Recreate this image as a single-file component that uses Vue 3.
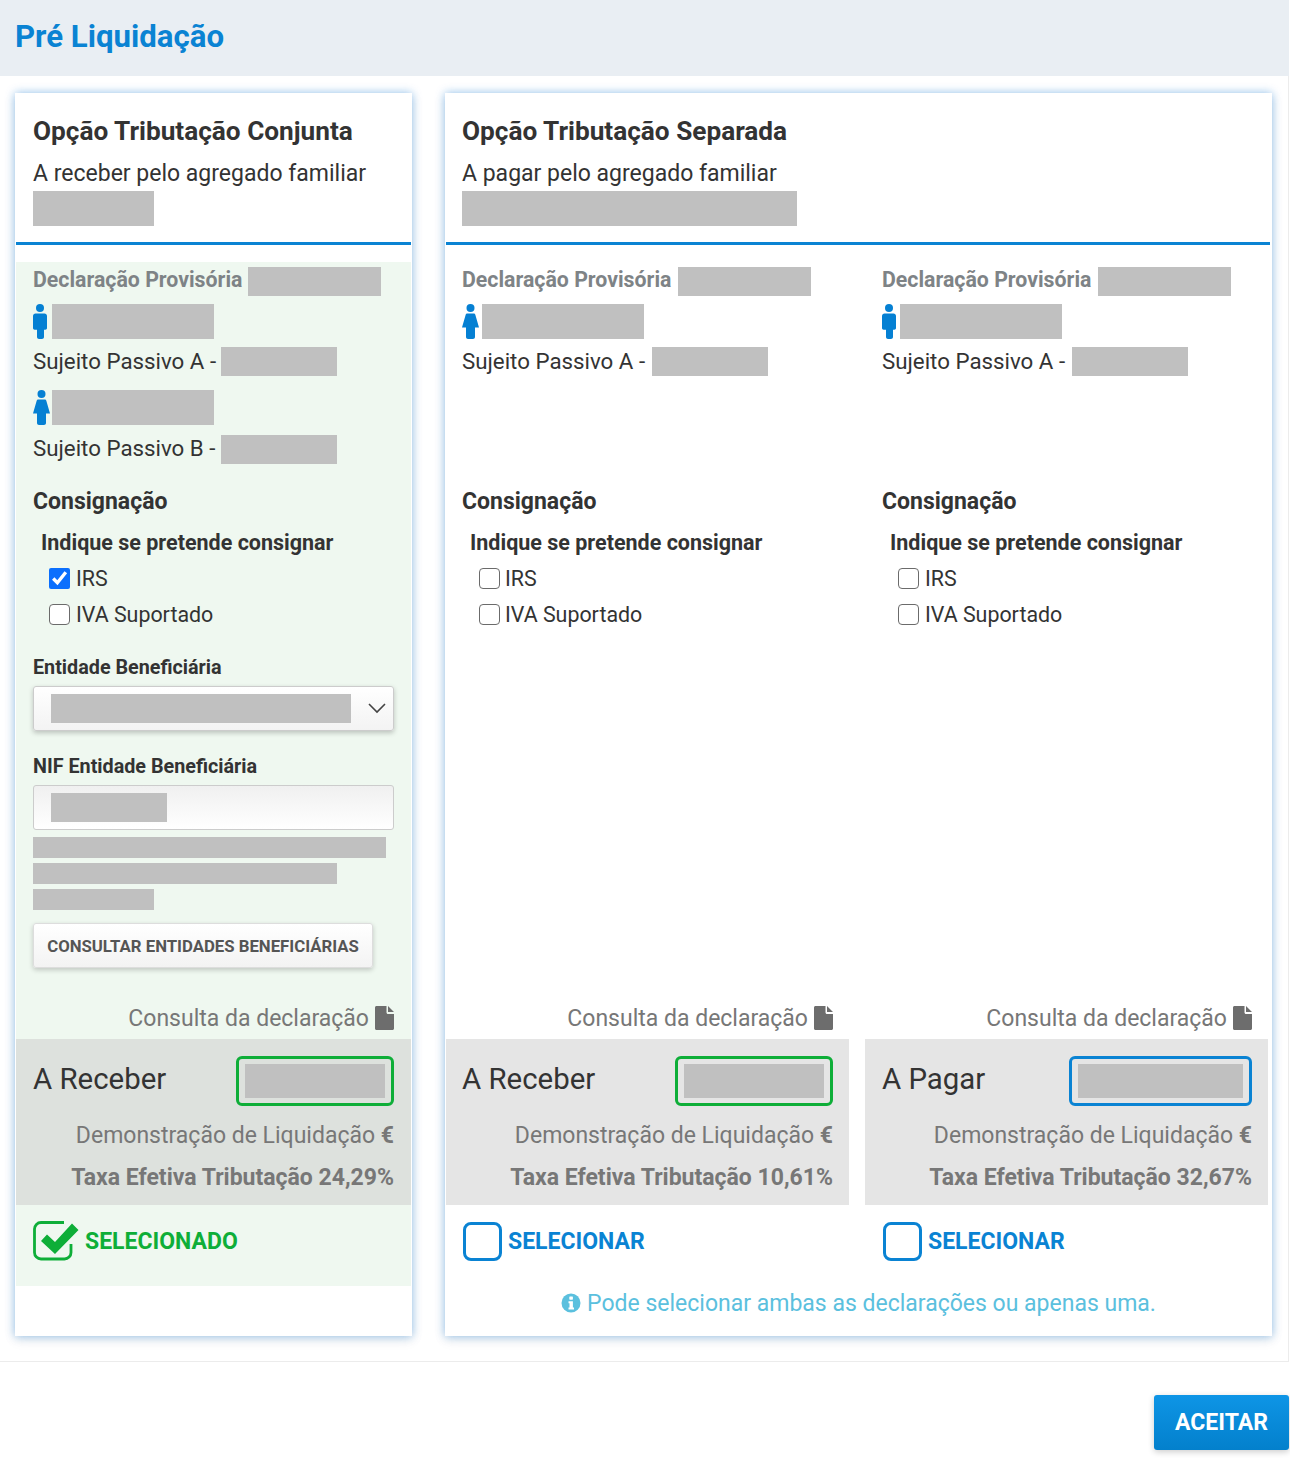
<template>
  <div class="page">
    <header class="page-head">
      <h1>Pré Liquidação</h1>
    </header>

    <main class="page-body">
      <section v-for="card in cards" :key="card.title" class="card" :class="{ 'card-wide': card.columns.length > 1 }">
        <div class="card-head">
          <h2>{{ card.title }}</h2>
          <p>{{ card.subtitle }}</p>
          <span class="redact total" :style="{ width: card.totalWidth + 'px' }"></span>
        </div>

        <div class="columns">
          <article
            v-for="(col, i) in card.columns"
            :key="i"
            class="col"
            :class="[{ selected: col.selected }, col.cls]"
          >
            <div class="decl">
              <b>Declaração Provisória</b>
              <span class="redact r-decl"></span>
            </div>

            <div class="people">
              <template v-for="p in col.people" :key="p.label">
                <div class="person">
                  <svg v-if="p.icon === 'f'" class="ico-f" viewBox="0 0 17 35" fill="#0580d3">
                    <circle cx="8.5" cy="4" r="4" />
                    <path d="M5.5 9.5h6c1 0 1.6.5 1.9 1.4L17 23.5H13v9.5c0 1.3-.9 2-2 2H6c-1.100 0-2-.7-2-2v-9.500H0l3.600-12.600c.3-.9.9-1.400 1.900-1.400z" />
                  </svg>
                  <svg v-else class="ico-m" viewBox="0 0 14 35" fill="#0580d3">
                    <circle cx="7" cy="4" r="4" />
                    <path d="M2.500 9.500h9c1.400 0 2.500 1.100 2.500 2.500v12c0 1-.7 1.700-1.700 1.700h-1.300v7.300c0 1.100-.9 2-2 2h-3c-1.100 0-2-.9-2-2v-7.300H1.700C.7 25.700 0 25 0 24V12c0-1.400 1.100-2.500 2.500-2.500z" />
                  </svg>
                  <span class="redact r-name"></span>
                </div>
                <div class="sujeito">
                  <span class="suj-label">{{ p.label }}</span>
                  <span class="redact r-nif"></span>
                </div>
              </template>
            </div>

            <h3>Consignação</h3>
            <h4>Indique se pretende consignar</h4>
            <label class="check">
              <input type="checkbox" :checked="col.selected" />
              IRS
            </label>
            <label class="check">
              <input type="checkbox" />
              IVA Suportado
            </label>

            <div v-if="col.selected" class="entity">
              <div class="field-label">Entidade Beneficiária</div>
              <div class="select">
                <span class="redact r-select"></span>
                <svg viewBox="0 0 18 11" width="18" height="11" fill="none" stroke="#444" stroke-width="1.600">
                  <path d="M1 1l8 8 8-8" />
                </svg>
              </div>
              <div class="field-label second">NIF Entidade Beneficiária</div>
              <div class="input">
                <span class="redact r-input"></span>
              </div>
              <div class="lines">
                <span class="redact l1"></span>
                <span class="redact l2"></span>
                <span class="redact l3"></span>
              </div>
              <button class="btn-consult" type="button">CONSULTAR ENTIDADES BENEFICIÁRIAS</button>
            </div>

            <div class="col-bottom">
              <div class="consulta">
                Consulta da declaração
                <svg viewBox="0 0 19 24" width="19" height="24" fill="#6d6d6d">
                  <path d="M1.500 0H11.500V6.500c0 .8.700 1.500 1.500 1.500H19V22.500c0 .8-.7 1.500-1.500 1.500H1.500C.7 24 0 23.300 0 22.500V1.500C0 .7.700 0 1.500 0zM13 0l6 6h-6z" />
                </svg>
              </div>

              <div class="band">
                <div class="band-top">
                  <span class="band-title">{{ col.title }}</span>
                  <span class="amount" :class="col.tone"><span class="redact"></span></span>
                </div>
                <div class="demo">Demonstração de Liquidação <b>€</b></div>
                <div class="rate">Taxa Efetiva Tributação {{ col.rate }}</div>
              </div>

              <div class="pick" :class="{ on: col.selected }">
                <svg v-if="col.selected" class="pick-ok" viewBox="0 0 46 40" width="46" height="40" fill="none">
                  <path d="M31 1.500H8A6.500 6.500 0 0 0 1.500 8V31.500A6.500 6.500 0 0 0 8 38H31.500A6.500 6.500 0 0 0 38 31.500V23" stroke="#0eae38" stroke-width="2.800" />
                  <path d="M8 20l6-6.500 8 7.500L39 2.500l6.500 6.500L22 33z" fill="#0eae38" />
                </svg>
                <span v-else class="pick-box"></span>
                <span>{{ col.selected ? 'SELECIONADO' : 'SELECIONAR' }}</span>
              </div>
            </div>
          </article>
        </div>

        <div class="note">
          <template v-if="card.note">
            <svg viewBox="0 0 20 20" width="20" height="20">
              <circle cx="10" cy="10" r="9.500" fill="#5bc0de" />
              <rect x="8.300" y="3.500" width="3.600" height="3.200" rx=".6" fill="#fff" />
              <path d="M7.500 8.300h4.400v6.300h1.100v2H7.500v-2h1v-4.300h-1z" fill="#fff" />
            </svg>
            {{ card.note }}
          </template>
        </div>
      </section>
    </main>

    <footer class="page-foot">
      <button class="btn-accept" type="button">ACEITAR</button>
    </footer>
  </div>
</template>

<script setup>
const cards = [
  {
    title: 'Opção Tributação Conjunta',
    subtitle: 'A receber pelo agregado familiar',
    totalWidth: 121,
    columns: [
      {
        selected: true,
        cls: 'col-joint',
        title: 'A Receber',
        tone: 'green',
        rate: '24,29%',
        people: [
          { icon: 'm', label: 'Sujeito Passivo A -' },
          { icon: 'f', label: 'Sujeito Passivo B -' },
        ],
      },
    ],
  },
  {
    title: 'Opção Tributação Separada',
    subtitle: 'A pagar pelo agregado familiar',
    totalWidth: 335,
    note: 'Pode selecionar ambas as declarações ou apenas uma.',
    columns: [
      {
        cls: 'col-a',
        title: 'A Receber',
        tone: 'green',
        rate: '10,61%',
        people: [{ icon: 'f', label: 'Sujeito Passivo A -' }],
      },
      {
        cls: 'col-b',
        title: 'A Pagar',
        tone: 'blue',
        rate: '32,67%',
        people: [{ icon: 'm', label: 'Sujeito Passivo A -' }],
      },
    ],
  },
];
</script>

<style>
html,
body {
  margin: 0;
  background: #fff;
}
</style>

<style scoped>
.page {
  width: 1289px;
  height: 1482px;
  font-family: Roboto, "Liberation Sans", sans-serif;
  color: #333;
  font-size: 23px;
}

.page-head {
  height: 76px;
  background: #e9eef3;
  display: flex;
  align-items: center;
  padding: 0 0 3px 15px;
  box-sizing: border-box;
}

h1 {
  margin: 0;
  font-size: 31.200px;
  font-weight: 700;
  color: #0a83d3;
}

.page-body {
  display: flex;
  gap: 33px;
  height: 1286px;
  box-sizing: border-box;
  padding: 17px 17px 25px 15px;
  border-right: 1px solid #ececec;
  border-bottom: 1px solid #ececec;
}

.card {
  width: 397px;
  flex: none;
  display: flex;
  flex-direction: column;
  background: #fff;
  box-shadow: 0 0 9px rgba(10, 120, 220, 0.42), 0 4px 12px rgba(0, 0, 0, 0.08);
}

.card-wide {
  width: 827px;
}

.card-head {
  height: 152px;
  margin: 0 1px;
  box-sizing: border-box;
  padding: 23px 17px 0;
  border-bottom: 3px solid #0a83d3;
}

.card-wide .card-head {
  padding-left: 16px;
  margin-right: 2px;
}

h2 {
  margin: 0;
  font-size: 26.200px;
  line-height: 30px;
  font-weight: 700;
  color: #333;
}

.card-head p {
  margin: 12px 0 0;
  line-height: 32px;
}

.redact {
  display: block;
  background: #c0c0c0;
  flex: none;
}

.total {
  height: 35px;
  margin-top: 1px;
}

.columns {
  flex: 1;
  display: flex;
  gap: 16px;
  margin: 17px 1px 0;
}

.card-wide .columns {
  margin-right: 4px;
}

.col {
  flex: 1;
  min-width: 0;
  display: flex;
  flex-direction: column;
  box-sizing: border-box;
  padding-top: 5px;
}

.col > *:not(.col-bottom) {
  margin-left: 17px;
  margin-right: 17px;
}

.col-a > *:not(.col-bottom) {
  margin-left: 16px;
}

.selected {
  background: #eff8f0;
}

.decl {
  display: flex;
  align-items: center;
  gap: 7px;
  height: 29px;
  font-size: 21.300px;
  color: #7e8386;
}

.col-joint .decl {
  gap: 6px;
}

.decl b {
  margin-bottom: 4px;
}

.r-decl {
  width: 133px;
  height: 29px;
}

.people {
  height: 180px;
  box-sizing: border-box;
  padding-top: 8px;
}

.person {
  display: flex;
  height: 35px;
  gap: 6px;
}

.person + .sujeito + .person {
  margin-top: 14px;
}

.ico-m {
  width: 14px;
  height: 35px;
}

.ico-f {
  width: 17px;
  height: 35px;
  margin-right: -4px;
}

.col-joint .ico-m {
  margin-right: -1px;
}

.col-a .ico-f {
  margin-right: -3px;
}

.col-b .ico-m {
  margin-right: -2px;
}

.r-name {
  width: 162px;
  height: 35px;
}

.sujeito {
  display: flex;
  align-items: center;
  gap: 7px;
  height: 29px;
  margin-top: 8px;
  font-size: 22.300px;
}

.suj-label {
  padding-bottom: 2px;
}

.col-joint .sujeito {
  gap: 4px;
}

.col-joint .suj-label {
  width: 184px;
}

.person + .sujeito + .person + .sujeito {
  margin-top: 10px;
}

.person + .sujeito + .person + .sujeito .suj-label {
  padding-bottom: 4px;
}

.r-nif {
  width: 116px;
  height: 29px;
}

h3 {
  margin: 10px 0 0;
  font-size: 23px;
  line-height: 32px;
  font-weight: 700;
}

h4 {
  padding-left: 8px;
  margin-top: 10px;
  margin-bottom: 0;
  font-size: 21.500px;
  line-height: 30px;
  font-weight: 700;
}

.check {
  display: flex;
  align-items: center;
  gap: 6px;
  height: 36px;
  padding-left: 16px;
  font-size: 21.400px;
}

.col-a .check {
  padding-left: 17px;
  gap: 5px;
}

.check input {
  width: 21px;
  height: 21px;
  margin: 0;
  accent-color: #0b6ffd;
}

.check input:not(:checked) {
  appearance: none;
  box-sizing: border-box;
  border: 1.500px solid #6b6b6b;
  border-radius: 4px;
  background: #fff;
}

h4 + .check {
  margin-top: 2px;
}

.entity {
  display: flex;
  flex-direction: column;
  margin-top: 23px;
}

.field-label {
  font-size: 19.750px;
  font-weight: 700;
  line-height: 26px;
}

.field-label.second {
  margin-top: 23px;
}

.select,
.input {
  display: flex;
  align-items: center;
  justify-content: space-between;
  box-sizing: border-box;
  height: 45px;
  margin-top: 5px;
  padding: 0 7px 0 17px;
  border: 1px solid #ccc;
  border-radius: 3px;
}

.select {
  background: linear-gradient(#fff, #f3f3f3);
  box-shadow: 0 2px 5px rgba(0, 0, 0, 0.22);
}

.input {
  background: linear-gradient(#f0f0f0, #fff);
}

.r-select {
  width: 300px;
  height: 29px;
}

.r-input {
  width: 116px;
  height: 29px;
}

.lines {
  display: flex;
  flex-direction: column;
  gap: 5px;
  margin-top: 7px;
}

.lines .redact {
  height: 21px;
}

.l1 {
  width: 353px;
}

.l2 {
  width: 304px;
}

.l3 {
  width: 121px;
}

.btn-consult {
  width: 340px;
  height: 45px;
  margin-top: 13px;
  padding: 0;
  border: 1px solid #ddd;
  border-radius: 3px;
  background: linear-gradient(#fff, #f3f3f3);
  box-shadow: 0 2px 5px rgba(0, 0, 0, 0.2);
  font-family: inherit;
  font-size: 16.750px;
  font-weight: 700;
  color: #555;
}

.col-bottom {
  margin-top: auto;
}

.consulta {
  display: flex;
  justify-content: flex-end;
  align-items: center;
  gap: 6px;
  height: 26px;
  padding-right: 17px;
  margin-bottom: 8px;
  color: #777;
}

.col-a .consulta,
.col-a .band,
.col-b .consulta,
.col-b .band {
  padding-right: 16px;
}

.band {
  height: 166px;
  box-sizing: border-box;
  padding: 17px 17px 0;
  background: #e5e5e5;
  text-align: right;
  color: #777;
}

.col-a .band {
  padding-left: 16px;
}

.selected .band {
  background: #dde1dd;
}

.band-top {
  display: flex;
  justify-content: space-between;
  align-items: center;
  height: 50px;
}

.band-title {
  font-size: 29.400px;
  color: #333;
  padding-bottom: 5px;
}

.amount {
  display: flex;
  box-sizing: border-box;
  height: 50px;
  width: 158px;
  padding: 5px 6px;
  border: 3px solid #0eae38;
  border-radius: 6px;
}

.amount.blue {
  width: 183px;
  border-color: #0a83d3;
}

.amount .redact {
  flex: 1;
}

.demo {
  margin-top: 15px;
  line-height: 30px;
}

.rate {
  margin-top: 12px;
  line-height: 30px;
  font-weight: 700;
}

.pick {
  display: flex;
  align-items: center;
  gap: 6px;
  height: 40px;
  margin-top: 16px;
  padding-left: 17px;
  padding-bottom: 25px;
  font-weight: 700;
  color: #0a83d3;
}

.col-a .pick {
  padding-left: 16px;
}

.pick.on {
  color: #0eae38;
}

.pick-ok {
  margin-top: -1px;
}

.pick-box {
  box-sizing: border-box;
  width: 39px;
  height: 39px;
  margin-left: 1px;
  border: 3px solid #0a83d3;
  border-radius: 8px;
}

.note {
  height: 50px;
  box-sizing: border-box;
  padding-bottom: 16px;
  display: flex;
  align-items: center;
  justify-content: center;
  gap: 6px;
  color: #5bc0de;
}

.page-foot {
  display: flex;
  justify-content: flex-end;
  padding-top: 33px;
}

.btn-accept {
  width: 135px;
  height: 55px;
  padding: 0;
  border: 0;
  border-radius: 3px;
  background: linear-gradient(#0e95e6, #0380cc);
  box-shadow: 0 2px 6px rgba(0, 0, 0, 0.2);
  font-family: inherit;
  font-size: 23px;
  font-weight: 700;
  color: #fff;
}
</style>
